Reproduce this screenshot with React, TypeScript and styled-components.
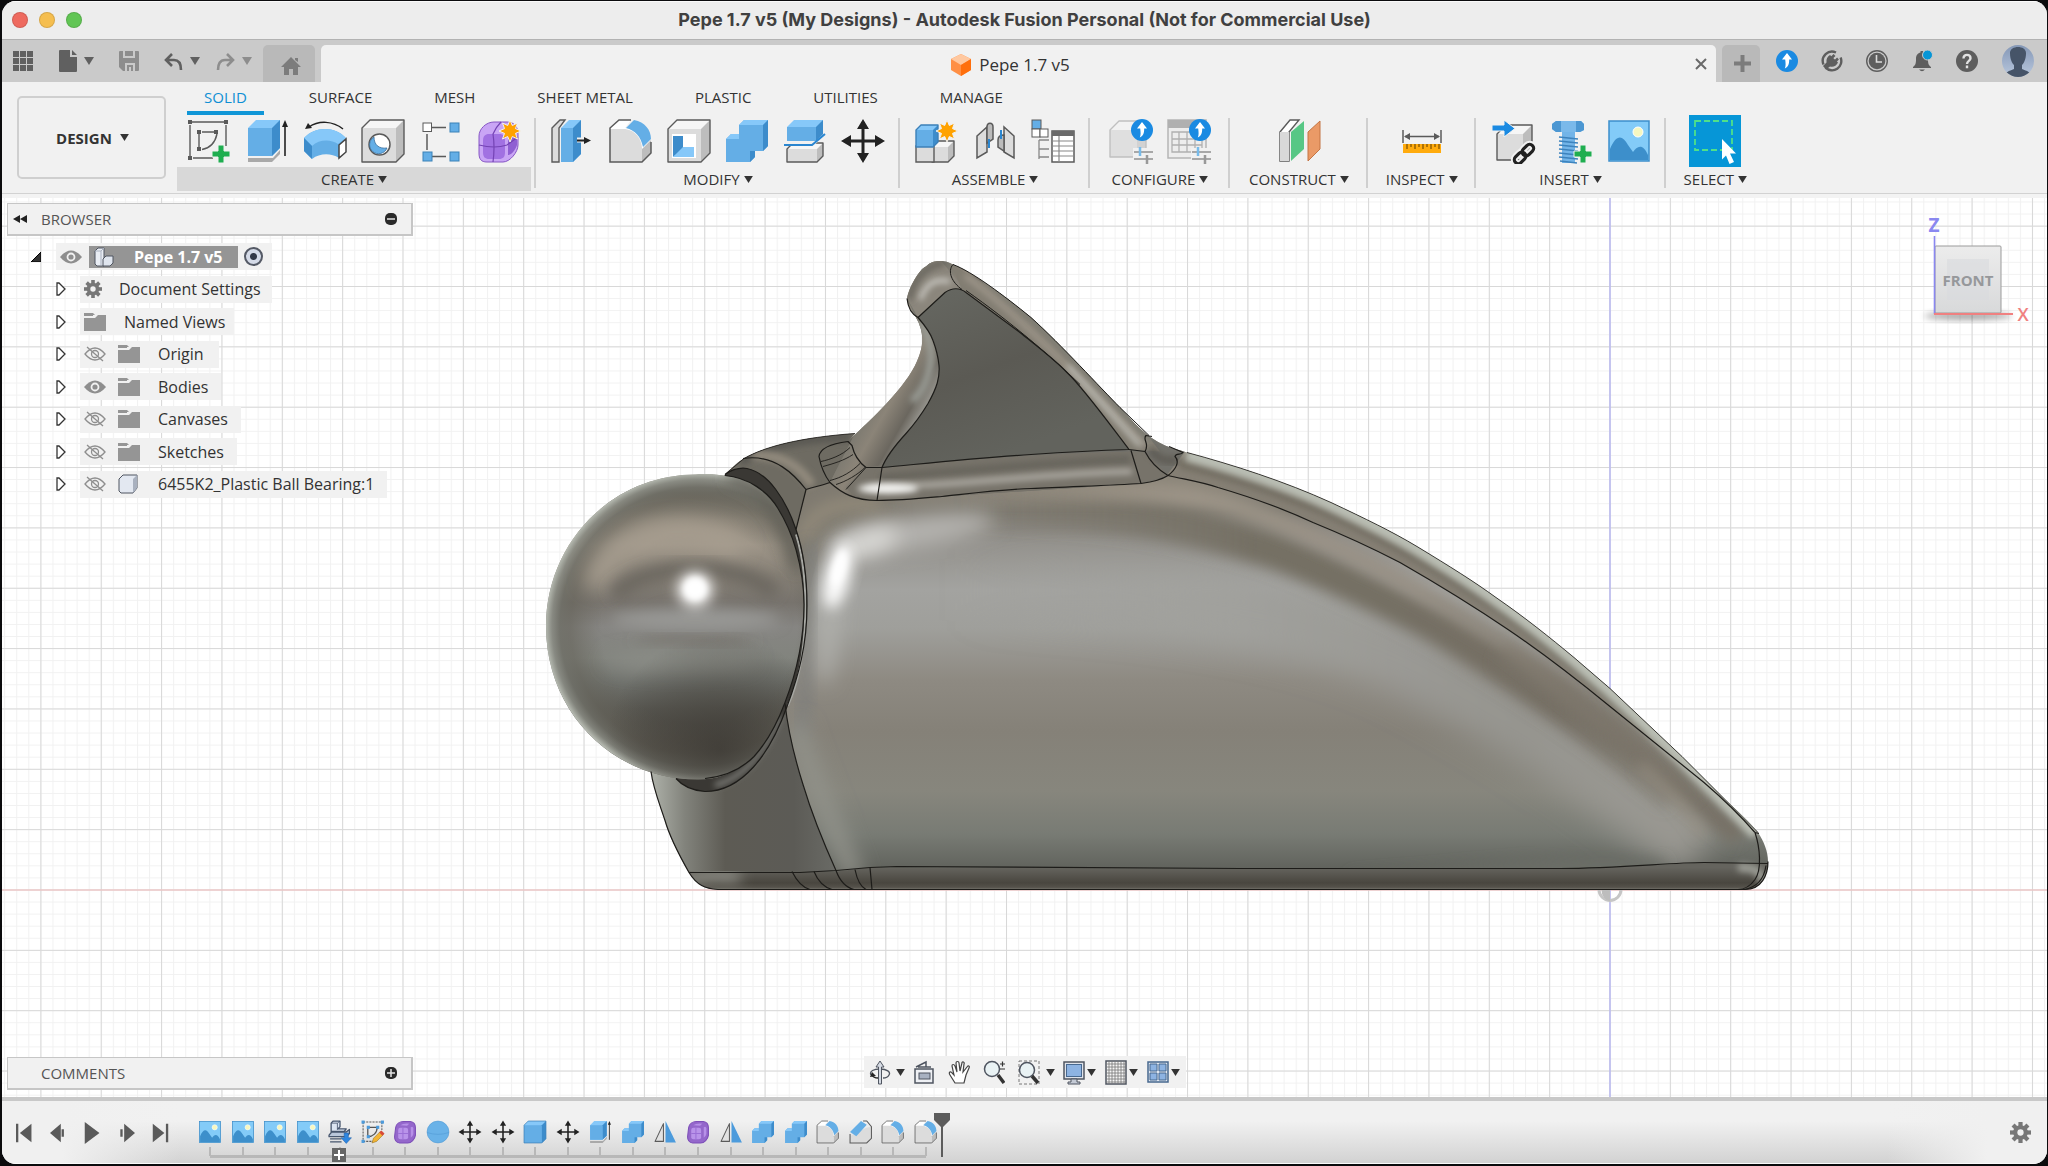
import React from "react";
import styled, { createGlobalStyle, css } from "styled-components";

const Global = createGlobalStyle`
  *, *::before, *::after { box-sizing: border-box; }
  html, body, #root { height: 100%; }
  body { margin: 0; background: #0b0b0d; overflow: hidden; font-family: "Open Sans", "Noto Sans", sans-serif; color: #333; }
  button { font: inherit; color: inherit; background: none; border: 0; margin: 0; padding: 0; }
  svg { display: block; flex: none; }
  ul, ol { list-style: none; margin: 0; padding: 0; }
`;

/* ---------- window frame ---------- */

const AppWindow = styled.div`
  height: 100vh;
  padding: 1px 1px 2px 2px;
  display: flex;
`;

const Frame = styled.div`
  flex: 1;
  min-width: 0;
  display: flex;
  flex-direction: column;
  border-radius: 14px;
  overflow: hidden;
  background: #f1f1f1;
`;

const TitleBar = styled.header`
  display: grid;
  grid-template-columns: 1fr auto 1fr;
  align-items: center;
  height: 39px;
  flex: none;
  padding: 0 10px 1px;
  background: #ededed;
  border-top: 1px solid #fafafa;
  border-bottom: 1px solid #b2b2b2;
`;

const Lights = styled.div`
  display: flex;
  gap: 11px;
`;

const Light = styled.button<{ $c: string }>`
  width: 16px;
  height: 16px;
  border-radius: 50%;
  background: ${(p) => p.$c};
  border: 1px solid rgba(0, 0, 0, 0.12);
`;

const WindowTitle = styled.h1`
  margin: 0;
  font: 700 18px/22px Inter, "Open Sans", sans-serif;
  color: #404040;
  white-space: nowrap;
`;

/* ---------- document tab bar ---------- */

const TabBar = styled.div`
  display: flex;
  align-items: flex-end;
  height: 42px;
  flex: none;
  background: #cacaca;
`;

const QuickTools = styled.div`
  display: flex;
  align-items: center;
  align-self: stretch;
  width: 261px;
  padding-left: 11px;
  color: #606060;
`;

const QuickButton = styled.button<{ $gap?: number; $dim?: boolean }>`
  display: flex;
  align-items: center;
  gap: 7px;
  margin-right: ${(p) => p.$gap ?? 0}px;
  color: ${(p) => (p.$dim ? "#8d8d8d" : "#606060")};
`;

const SideTab = styled.button`
  display: flex;
  align-items: center;
  justify-content: center;
  width: 52px;
  height: 37px;
  padding: 4px 0 0 4px;
  border-radius: 5px 5px 0 0;
  background: #b9b9b9;
  color: #7c7c7c;
`;

const NewTab = styled(SideTab)`
  width: 38px;
  padding: 0 0 0 2px;
  margin-left: 6px;
`;

const ActiveTab = styled.div`
  flex: 1;
  display: flex;
  align-items: center;
  justify-content: center;
  height: 37px;
  margin-left: 6px;
  padding-left: 14px;
  border-radius: 5px 5px 0 0;
  background: #f1f1f1;
`;

const TabName = styled.div`
  flex: 1;
  display: flex;
  align-items: center;
  justify-content: center;
  gap: 8px;
  padding-top: 3px;
  font-size: 17px;
  line-height: 24px;
`;

const CloseTab = styled.button`
  width: 30px;
  display: flex;
  justify-content: center;
  color: #6a6a6a;
`;

const AccountTools = styled.div`
  display: flex;
  align-items: center;
  align-self: stretch;
  padding: 0 13px 0 4px;
`;

const AccountButton = styled.button`
  width: 45px;
  display: flex;
  justify-content: center;
  color: #5e5e5e;
`;

const Avatar = styled.button`
  margin-left: 13px;
`;

/* ---------- ribbon ---------- */

const Ribbon = styled.div`
  display: flex;
  flex: none;
  height: 116px;
  padding-left: 15px;
  background: #f1f1f1;
  border-bottom: 4px solid #f3f3f3;
  box-shadow: inset 0 -1px 0 #d2d2d2;
`;

const WorkspaceButton = styled.button`
  display: flex;
  align-items: center;
  justify-content: center;
  gap: 8px;
  width: 149px;
  height: 83px;
  margin: 14px 6px 0 0;
  padding-left: 2px;
  border: 2px solid #cfcfcf;
  border-radius: 5px;
  font-size: 15px;
  font-weight: 700;
`;

const RibbonMain = styled.div`
  flex: 1;
  min-width: 0;
`;

const RibbonTabs = styled.div`
  display: flex;
  gap: 28px;
  height: 33px;
  padding-left: 15px;
`;

const RibbonTab = styled.button<{ $active?: boolean }>`
  height: 33px;
  padding: 0 17px;
  font-size: 15px;
  line-height: 20px;
  white-space: nowrap;
  color: ${(p) => (p.$active ? "#0e8fd4" : "#333")};
  border-bottom: 4px solid ${(p) => (p.$active ? "#1096d7" : "transparent")};
`;

const Groups = styled.div`
  display: flex;
  height: 76px;
`;

const Group = styled.section<{ $pad: number; $line?: boolean }>`
  display: flex;
  flex-direction: column;
  justify-content: space-between;
  padding: 0 ${(p) => p.$pad}px;
  ${(p) =>
    p.$line &&
    css`
      background: linear-gradient(#cfcfcf, #cfcfcf) right 3px / 2px 70px no-repeat;
    `}
`;

const IconRow = styled.div`
  display: flex;
  justify-content: center;
`;

const ToolButton = styled.button<{ $active?: boolean }>`
  display: flex;
  align-items: center;
  justify-content: center;
  width: ${(p) => (p.$active ? 52 : 58)}px;
  height: 52px;
  background: ${(p) => (p.$active ? "#0696d7" : "none")};
`;

const GroupLabel = styled.button<{ $on?: boolean }>`
  display: flex;
  align-items: center;
  justify-content: center;
  gap: 4px;
  height: 24px;
  margin: 0 -3px;
  font-size: 15px;
  white-space: nowrap;
  background: ${(p) => (p.$on ? "#d8d8d8" : "none")};
`;

/* ---------- viewport ---------- */

const Viewport = styled.main`
  flex: 1;
  min-height: 0;
  position: relative;
  background: #fff;
  display: flex;
  flex-direction: column;
  justify-content: space-between;
  padding: 5px 5px 7px;
`;

const Scene = styled.svg`
  position: absolute;
  inset: 0;
  width: 100%;
  height: 100%;
`;

const Overlay = styled.div`
  position: relative;
  display: flex;
  justify-content: space-between;
  align-items: flex-start;
`;

const OverlayBottom = styled.div`
  position: relative;
  display: grid;
  grid-template-columns: 1fr auto 1fr;
  align-items: end;
  padding-left: 2px;
  margin-left: -2px;
`;

const PanelBar = styled.div`
  display: flex;
  align-items: center;
  width: 406px;
  height: 33px;
  padding: 0 14px 0 5px;
  background: #f1f1f1;
  border: solid #c6c6c6;
  border-width: 1px 2px 2px 1px;
  color: #555;
`;

const PanelName = styled.h2<{ $left: number }>`
  flex: 1;
  margin: 0 0 0 ${(p) => p.$left}px;
  font-size: 15px;
  font-weight: 400;
`;

const Tree = styled.ul`
  display: grid;
  align-content: space-between;
  height: 255px;
  margin-top: 7px;
  padding-left: 24px;
`;

const TreeRow = styled.li<{ $root?: boolean }>`
  display: flex;
  align-items: center;
  padding-left: ${(p) => (p.$root ? 0 : 25)}px;
`;

const Twisty = styled.button<{ $root?: boolean }>`
  width: ${(p) => (p.$root ? 25 : 24)}px;
  height: 27px;
  display: flex;
  align-items: center;
`;

const NodeBox = styled.div<{ $end: number }>`
  display: flex;
  align-items: center;
  height: 27px;
  padding: 0 ${(p) => p.$end}px 0 4px;
  background: #f1f1f1;
`;

const NodeIcon = styled.span<{ $w: number }>`
  width: ${(p) => p.$w}px;
  display: flex;
`;

const NodeText = styled.span`
  font-size: 16px;
  line-height: 24px;
  white-space: nowrap;
`;

const RootName = styled.span`
  display: flex;
  align-items: center;
  gap: 20px;
  height: 22px;
  padding: 0 15px 0 5px;
  margin: 0 6px 0 7px;
  background: #959595;
  color: #fff;
  font-size: 16px;
  font-weight: 700;
  white-space: nowrap;
`;

const RootRadio = styled.input`
  appearance: none;
  margin: 0;
  width: 19px;
  height: 19px;
  border-radius: 50%;
  border: 2px solid #555a66;
  background: radial-gradient(circle, #333a48 0 3px, #d5dbe8 4px 100%);
`;

const NavBar = styled.div`
  display: flex;
  align-items: center;
  height: 32px;
  margin-bottom: 2px;
  padding: 0 3px 0 5px;
  background: #f1f1f1;
`;

const NavButton = styled.button<{ $w: number; $gap?: number }>`
  display: flex;
  align-items: center;
  gap: ${(p) => p.$gap ?? 0}px;
  width: ${(p) => p.$w}px;
`;

const ViewCube = styled.svg`
  margin: 5px 9px 0 0;
`;

/* ---------- timeline ---------- */

const Timeline = styled.footer`
  display: flex;
  align-items: flex-start;
  flex: none;
  height: 67px;
  padding: 15px 16px 0 5px;
  border-top: 4px solid #c8c8c8;
  border-bottom: 1px solid #fafafa;
  background:
    linear-gradient(90deg, #f0f0f0 60px, rgba(240, 240, 240, 0) 180px, rgba(240, 240, 240, 0) calc(100% - 160px), #f0f0f0 calc(100% - 60px)),
    linear-gradient(#f1f1f1 20px, #d2d2d2);
`;

const Playback = styled.div`
  display: flex;
  width: 187px;
  padding-top: 4px;
`;

const PlayButton = styled.button`
  width: 34px;
  height: 26px;
  display: flex;
  align-items: center;
  justify-content: center;
`;

const Features = styled.ol`
  display: flex;
  width: 748px;
`;

const Feature = styled.li<{ $edge?: "first" | "last" }>`
  flex: 1;
  position: relative;
  display: flex;
  flex-direction: column;
  align-items: center;
  height: 42px;
  padding-top: 3px;
  background:
    linear-gradient(#b8b8b8, #b8b8b8) center 31px / 2px 9px no-repeat,
    linear-gradient(#b8b8b8, #b8b8b8)
      ${(p) => (p.$edge === "first" ? "right" : "left")} 39px /
      ${(p) => (p.$edge ? "17px" : "100%")} 3px no-repeat;
`;

const FeatureButton = styled.button`
  width: 26px;
  height: 26px;
  display: flex;
  align-items: center;
  justify-content: center;
`;

const ExpandBadge = styled.button`
  position: absolute;
  left: 8px;
  top: 32px;
  width: 14px;
  height: 14px;
  background: #666;
  display: flex;
  align-items: center;
  justify-content: center;
`;

const Marker = styled.svg`
  margin: -3px 0 0 -9px;
`;

const SettingsButton = styled.button`
  margin: 6px 0 0 auto;
`;

/* ---------- small drawings ---------- */

const Caret = ({ w = 9, c = "#333" }: { w?: number; c?: string }) => (
  <svg width={w} height={w - 2} viewBox="0 0 10 8">
    <path d="M0 0H10L5 8Z" fill={c} />
  </svg>
);

const D = "#5a5a5a";
const B = "#64aee6";
const BL = "#86c8f9";
const BD = "#3d8ccb";

const Plus = ({ x, y }: { x: number; y: number }) => (
  <path
    transform={`translate(${x} ${y})`}
    d="M-3-9H3V-3H9V3H3V9H-3V3H-9V-3H-3Z"
    fill="#1fae50"
    stroke="#f1f1f1"
    strokeWidth="1"
  />
);

const Star = ({ x, y }: { x: number; y: number }) => (
  <path
    transform={`translate(${x} ${y})`}
    d="M0-11L2.3-5.5L7.5-8L5.5-2.4L11 0L5.5 2.4L7.5 8L2.3 5.5L0 11L-2.3 5.5L-7.5 8L-5.5 2.4L-11 0L-5.5-2.4L-7.5-8L-2.3-5.5Z"
    fill="#ffa200"
    stroke="#f1f1f1"
  />
);

const UpBadge = ({ x, y, r = 10 }: { x: number; y: number; r?: number }) => (
  <g transform={`translate(${x} ${y}) scale(${r / 10})`}>
    <circle r="11" fill="#1a8ae2" />
    <path d="M0-8L5-1.500H2.200C2.200 3 1.500 5.500-2.200 7.500C-1 5-1.400 2-1.800-1.500H-5Z" fill="#fff" />
  </g>
);

const Cube = ({ x, y, w, h, d, f = "#dcdcdc", t = "#f6f6f6", s = "#bdbdbd", o = D }: any) => (
  <g transform={`translate(${x} ${y})`}>
    <path d={`M0 ${d}L${d} 0H${w}V${h - d}L${w - d} ${h}H0Z`} fill={t} />
    <path d={`M0 ${d}H${w - d}V${h}H0Z`} fill={f} />
    <path d={`M${w - d} ${d}L${w} 0V${h - d}L${w - d} ${h}Z`} fill={s} />
    <path d={`M0 ${d}L${d} 0H${w}V${h - d}L${w - d} ${h}H0Z`} fill="none" stroke={o} strokeWidth="1.4" strokeLinejoin="round" />
  </g>
);

const blue = { f: B, t: BL, s: BD, o: "none" };

const art: Record<string, React.ReactNode> = {
  sketch: (
    <>
      <path d="M5 3H37M3 6V37M39 6V27M6 39H26M12 15V28M15 13H27" stroke={D} strokeWidth="1.4" />
      <path d="M30 15C28 24 24 29 15 30.500" fill="none" stroke={D} strokeWidth="1.4" />
      {[[1, 1], [37, 1], [1, 37], [10, 11], [27, 11], [10, 28]].map(([x, y]) => (
        <rect key={`${x}-${y}`} x={x} y={y} width="4" height="4" fill={D} />
      ))}
      <Plus x={34} y={35} />
    </>
  ),
  sketchSmall: (
    <>
      <path d="M3 3H39M3 3V40M39 3V18M3 40H22" stroke={D} strokeWidth="2" strokeDasharray="4 2" />
      <path d="M12 13H30C30 24 22 31 12 31Z" fill="none" stroke="#555" strokeWidth="2.500" />
      {[[0, 0], [37, 0], [0, 37], [10, 10], [28, 10], [10, 28]].map(([x, y]) => (
        <rect key={`${x}-${y}`} x={x} y={y} width="6" height="6" fill="#4c9bdc" />
      ))}
      <path d="M20 43L23 34L36 21L42 27L29 40Z" fill="#f3b434" stroke="#8a6a20" strokeWidth="1" />
      <path d="M34 23L38 19L44 25L40 29Z" fill="#d84a3a" />
    </>
  ),
  extrude: (
    <>
      <path d="M3 38H27L35 30V35L27 43H3Z" fill="#a9a9a9" />
      <path d="M3 36H27L35 28V31L28 39H3Z" fill="#f1f1f1" />
      <Cube x={3} y={1} w={32} h={36} d={8} {...blue} />
      <path d="M40 37V6" stroke="#222" strokeWidth="1.600" />
      <path d="M37 8L40 1L43 8Z" fill="#222" />
    </>
  ),
  revolve: (
    <>
      <path d="M1 19C12 7 32 7 43 19L36 26L36 39C28 34 17 34 9 40L1 32Z" fill={B} />
      <path d="M1 19C12 7 32 7 43 19L35 25C28 20 16 20 9 27Z" fill={BL} />
      <path d="M1 19L9 27V40L1 32Z" fill={BD} />
      <path d="M36 26L43 20V33L36 39Z" fill="#fff" stroke="#444" strokeWidth="1.500" />
      <path d="M6 8C16 1 30 2 40 10" fill="none" stroke="#222" strokeWidth="1.500" />
      <path d="M2 10L5 4L9 9Z" fill="#222" />
    </>
  ),
  hole: (
    <>
      <Cube x={1} y={1} w={42} h={42} d={8} />
      <circle cx="18.500" cy="25.500" r="10.500" fill="#fff" stroke={D} strokeWidth="1.500" />
      <path d="M13 18A9 9 0 1 0 26 29C18 30 13 26 13 18Z" fill={B} stroke="#3b6f9c" strokeWidth=".8" />
    </>
  ),
  pattern: (
    <>
      <path d="M13 8.500H27M8 15V31M13 37.500H27" stroke={D} strokeWidth="1.500" />
      <rect x="4" y="4" width="8.500" height="8.500" fill="#fff" stroke={D} />
      {[[31, 4], [4, 33], [31, 33]].map(([x, y]) => (
        <rect key={`${x}${y}`} x={x} y={y} width="9" height="9" fill={B} stroke="#3b82b8" />
      ))}
    </>
  ),
  form: (
    <>
      <path d="M2 17C2 10 9 3 17 3H30C38 3 41 9 41 15V26C41 33 33 43 26 43H10C4 43 2 40 2 34Z" fill="#c9a5f5" stroke="#8656c4" />
      <path d="M6 22C6 17 8 15 12 15H22C27 15 28 17 28 22V33C28 38 26 40 22 40H12C8 40 6 38 6 33Z" fill="#a171e2" />
      <path d="M31 17C34 14 38 14 40 17V26C38 32 34 36 31 36Z" fill="#8f5fd2" />
      <path d="M2 26Q18 30 30 26L41 18M16 43Q18 28 16 15Q19 8 24 3" fill="none" stroke="#7443b4" strokeWidth="1.200" />
    </>
  ),
  formSmall: (
    <>
      <path d="M4 14C5 6 12 2 19 2H32C39 3 42 8 42 14V28C41 36 34 43 27 43H12C5 42 2 38 2 31Z" fill="#9467cb" stroke="#7d4fb8" strokeWidth="2" />
      <path d="M9 18Q9 14 13 14H24Q28 14 28 18V32Q28 36 24 36H13Q9 36 9 32Z" fill="#b993ea" />
      <path d="M18 14V36M9 25H28" stroke="#9b6fd6" strokeWidth="2" />
      <path d="M33 13Q37 10 38 15V26Q37 31 33 33ZM13 9Q18 5 30 6L26 10Z" fill="#b791e8" />
    </>
  ),
  press: (
    <>
      <path d="M1 9L9 1H14L8 9V43H1Z" fill="#dcdcdc" stroke={D} strokeWidth="1.400" />
      <Cube x={10} y={1} w={20} h={42} d={8} {...blue} />
      <path d="M26 21H36" stroke="#f1f1f1" strokeWidth="5" />
      <path d="M26 21.500H35" stroke="#222" strokeWidth="1.800" />
      <path d="M33 18L40 21.500L33 25Z" fill="#222" />
    </>
  ),
  fillet: (
    <>
      <path d="M1 9L10 1H22L16 9C28 10 34 20 34 28L42 21V34L33 43H1Z" fill="#fff" />
      <path d="M1 10H14C26 10 33 20 33 30V43H1Z" fill="#dcdcdc" />
      <path d="M33 30L42 21V34L33 43Z" fill="#bdbdbd" />
      <path d="M17 9L25 1C36 3 42 11 42 20L34 28C32 18 26 11 17 9Z" fill={B} />
      <path d="M22 1H10L1 9V43H33L42 34V23" fill="none" stroke={D} strokeWidth="1.500" />
    </>
  ),
  chamfer: (
    <>
      <path d="M1 30L32 14L42 12V34L33 43H1Z" fill="#dcdcdc" />
      <path d="M1 22L22 1L33 8L13 30Z" fill={B} />
      <path d="M1 26V43H33L42 34V12L33 1H26" fill="none" stroke={D} strokeWidth="2" />
    </>
  ),
  shell: (
    <>
      <Cube x={1} y={1} w={42} h={42} d={9} />
      <rect x="5" y="15" width="24" height="24" fill="#fff" />
      <path d="M6 17H16V30L6 38Z" fill={BD} />
      <path d="M6 38L16 28H27V38Z" fill={BL} />
    </>
  ),
  combine: (
    <>
      <path d="M1 20L6 15H14V6L19 1H43V27L38 32H30V38L25 43H1Z" fill={B} />
      <path d="M1 20L6 15H14V20ZM14 6L19 1H43L38 6Z" fill={BL} />
      <path d="M38 6L43 1V27L38 32ZM25 32H30V38L25 43Z" fill={BD} />
    </>
  ),
  split: (
    <>
      <Cube x={4} y={24} w={36} h={19} d={6} />
      <path d="M0 27H30L44 15V9L30 21H0Z" fill="#f1f1f1" />
      <Cube x={4} y={1} w={36} h={21} d={7} {...blue} />
      <path d="M1 26H29L42 15" fill="none" stroke="#2a86d0" strokeWidth="2" />
    </>
  ),
  move: (
    <>
      <path d="M22 8V36M8 22H36" stroke="#222" strokeWidth="3" />
      <path d="M22 0L28 10H16ZM22 44L28 34H16ZM0 22L10 16V28ZM44 22L34 16V28Z" fill="#222" />
    </>
  ),
  newComponent: (
    <>
      <Cube x={17} y={22} w={22} h={21} d={6} />
      <path d="M1 27H19V43H1Z" fill="#dcdcdc" stroke={D} strokeWidth="1.400" />
      <Cube x={1} y={6} w={22} h={22} d={5} {...blue} o="#3c80b8" />
      <Star x={32} y={12} />
    </>
  ),
  joint: (
    <>
      <path d="M4 17L14 8V33L4 39Z" fill="#dcdcdc" stroke={D} strokeWidth="1.500" />
      <path d="M14 8C14 3 20 3 20 8V20L14 24Z" fill="#bbb" stroke={D} strokeWidth="1.500" />
      <path d="M41 17L31 8V33L41 39Z" fill="#dcdcdc" stroke={D} strokeWidth="1.500" />
      <path d="M31 16C27 16 25 18 25 21V28L31 32Z" fill="#bbb" stroke={D} strokeWidth="1.500" />
      <path d="M16 20V29M28 11V20" stroke="#2a86d0" strokeWidth="2" />
    </>
  ),
  bom: (
    <>
      <rect x="1" y="1" width="9" height="9" fill={B} stroke={D} />
      <rect x="1" y="10" width="8" height="8" fill="#fff" stroke={D} />
      <rect x="9" y="10" width="8" height="8" fill="#fff" stroke={D} />
      <path d="M8 21V40M8 21H18M8 30H18M8 38H18" stroke="#888" fill="none" strokeWidth="1.300" />
      <rect x="21" y="12" width="22" height="31" fill="#fff" stroke={D} strokeWidth="1.500" />
      <rect x="21" y="12" width="22" height="5" fill="#6a6a6a" />
      <path d="M28 17V43M21 22H43M21 27H43M21 32H43M21 37H43" stroke="#888" strokeWidth="1.200" />
    </>
  ),
  configBody: (
    <>
      <Cube x={1} y={2} w={36} h={36} d={9} f="#dfdfdf" t="#f2f2f2" s="#d2d2d2" o="#c0c0c0" />
      <path d="M24 29H46V46H24Z" fill="#f1f1f1" />
      <path d="M25 33H44M25 40H44" stroke="#a8a8a8" strokeWidth="2" />
      <path d="M31 28V37" stroke="#77bbea" strokeWidth="2.500" />
      <path d="M38 36V45" stroke="#999" strokeWidth="2.500" />
      <UpBadge x={33} y={11} />
    </>
  ),
  configTable: (
    <>
      <rect x="1" y="1" width="38" height="38" fill="#ededed" stroke="#b5b5b5" strokeWidth="1.500" />
      <rect x="1" y="1" width="38" height="8" fill="#b0b0b0" />
      <path d="M5 13H35V33H5ZM5 20H35M5 26H35M12 13V33M20 13V33M28 13V33" fill="none" stroke="#b0b0b0" strokeWidth="1.300" />
      <path d="M24 29H46V46H24Z" fill="#f1f1f1" />
      <path d="M25 33H44M25 40H44" stroke="#a8a8a8" strokeWidth="2" />
      <path d="M31 28V37" stroke="#77bbea" strokeWidth="2.500" />
      <path d="M38 36V45" stroke="#999" strokeWidth="2.500" />
      <UpBadge x={33} y={11} />
    </>
  ),
  construct: (
    <>
      <path d="M3 13L13 1H22L12 13V42H3Z" fill="#fff" stroke={D} strokeWidth="1.400" />
      <path d="M3 13H12V42H3Z" fill="#d9d9d9" />
      <path d="M14 13L27 2V30L14 42Z" fill="#57c785" />
      <path d="M31 13L43 2V30L31 42Z" fill="#ea9a67" stroke="#c47544" />
    </>
  ),
  inspect: (
    <>
      <path d="M3 11V24M41 11V24M5 17.500H39" stroke={D} strokeWidth="1.500" />
      <path d="M4 17.500L10 14V21ZM40 17.500L34 14V21Z" fill={D} />
      <rect x="3" y="25" width="38" height="9" fill="#ffab0d" />
      <path d="M7 25V30M11 25V28M15 25V30M19 25V28M23 25V30M27 25V28M31 25V30M35 25V28M39 25V30" stroke="#7a4d00" strokeWidth="1.200" />
    </>
  ),
  derive: (
    <>
      <Cube x={6} y={6} w={35} h={35} d={9} />
      <path d="M1 6H13V1L24 9.500L13 18V12H1Z" fill="#1a8ae2" stroke="#f1f1f1" />
      <g transform="translate(33 35) rotate(-45)" fill="none" stroke="#f1f1f1" strokeWidth="7">
        <rect x="-12" y="-4" width="13" height="8" rx="4" />
        <rect x="-1" y="-4" width="13" height="8" rx="4" />
      </g>
      <g transform="translate(33 35) rotate(-45)" fill="none" stroke="#222" strokeWidth="3.200">
        <rect x="-12" y="-4" width="13" height="8" rx="4" />
        <rect x="-1" y="-4" width="13" height="8" rx="4" />
      </g>
    </>
  ),
  bolt: (
    <>
      <path d="M3 5L7 2H32L35 5V11L31 13H7L3 10Z" fill="#7ab9ea" />
      <path d="M27 2H32L35 5V11L31 13H27ZM3 5L7 2H12V13H7L3 10Z" fill="#4c97d2" />
      <rect x="13" y="13" width="13" height="31" fill="#72b4e8" />
      <path d="M10 18L29 20M10 22L29 24M10 26L29 28M10 30L29 32M10 34L29 36M10 38L29 40M11 42L28 44" stroke="#3d83bd" strokeWidth="1.600" />
      <Plus x={34} y={35} />
    </>
  ),
  image: (
    <>
      <rect x="2" y="2" width="40" height="40" fill="#83cbf8" stroke="#3d8fcb" strokeWidth="1.500" />
      <circle cx="31" cy="13" r="5" fill="#f6f7c0" stroke="#fff" />
      <path d="M3 30C9 16 15 15 21 26L26 33C30 27 36 24 41 36V41H3Z" fill="#3d8fcb" />
    </>
  ),
  select: (
    <>
      <rect x="2" y="2" width="37" height="29" fill="none" stroke="#4fe08a" strokeWidth="1.800" strokeDasharray="6 3" />
      <path d="M29 20L43 34.500H37L41 43L36.500 45L33 36.500L29 40.500Z" fill="#fff" />
    </>
  ),
  sphere: (
    <>
      <circle cx="22" cy="22" r="21" fill="#69b2e8" stroke="#4b95d0" />
      <path d="M1 23Q22 30 43 23" fill="none" stroke="#4b95d0" />
    </>
  ),
  box: <Cube x={1} y={1} w={42} h={42} d={8} {...blue} o="#3c80b8" />,
  mirror: (
    <>
      <path d="M19 6V40H3Z" fill="#e2e2e2" stroke={D} strokeWidth="2" strokeLinejoin="round" />
      <path d="M23 1V42H43Z" fill="#4c9bdc" />
    </>
  ),
  component: (
    <>
      <path d="M5 5L9 1H22V12L18 16H34L30 21H5Z" fill="#dce5f2" stroke="#47566e" strokeWidth="2.500" strokeLinejoin="round" />
      <path d="M5 5H17V18M17 5L22 1" fill="none" stroke="#47566e" strokeWidth="1.600" />
      <path d="M1 28L6 22H34L40 17V25L34 31H1Z" fill="#b9c6da" stroke="#47566e" strokeWidth="2.500" strokeLinejoin="round" />
      <path d="M3 35H25M3 41H25" stroke="#47566e" strokeWidth="2.500" />
      <path d="M30 24H38V33H44L34 44L24 33H30Z" fill="#2f86e0" stroke="#1d5da6" />
    </>
  ),
};
art.formStar = (
  <>
    {art.form}
    <Star x={33} y={12} />
  </>
);

const Art = ({ n, s = 46 }: { n: string; s?: number }) => (
  <svg width={s} height={s} viewBox="-1 -1 46 46">
    {art[n]}
  </svg>
);

const Eye = () => (
  <svg width="22" height="14" viewBox="0 0 22 14">
    <path d="M0 7Q11-6 22 7Q11 20 0 7Z" fill="#8e8e8e" />
    <circle cx="11" cy="7" r="3.500" fill="none" stroke="#f1f1f1" strokeWidth="1.800" />
  </svg>
);

const EyeOff = () => (
  <svg width="22" height="16" viewBox="0 0 22 16" fill="none" stroke="#8e8e8e" strokeWidth="1.300">
    <path d="M1 8Q11-4 21 8Q11 20 1 8ZM3 1L19 15" />
    <circle cx="11" cy="8" r="3.500" />
  </svg>
);

const Folder = () => (
  <svg width="22" height="18" viewBox="0 0 22 18">
    <path d="M0 0H9L11 2H9V3H0Z" fill="#959595" />
    <path d="M0 5H11L14 2H22V18H0Z" fill="#959595" />
  </svg>
);

const Gear = ({ s = 18 }: { s?: number }) => (
  <svg width={s} height={s} viewBox="-10 -10 20 20" fill="#777">
    {[0, 45, 90, 135].map((a) => (
      <rect key={a} x="-2" y="-10" width="4" height="20" transform={`rotate(${a})`} />
    ))}
    <circle r="7" />
    <circle r="3" fill="#f1f1f1" />
  </svg>
);

const BodyCube = ({ pair }: { pair?: boolean }) => (
  <svg width="20" height="20" viewBox="0 0 20 20" stroke="#4f5560" strokeLinejoin="round">
    {pair ? (
      <>
        <path d="M1 4L4 1H10V19H3L1 17Z" fill="#e9edf4" />
        <path d="M9 12L12 9H19V16L16 19H9Z" fill="#dfe5ee" />
        <path d="M7 4V18M1 4H7L10 1" fill="none" stroke="#a9b1bf" />
      </>
    ) : (
      <>
        <path d="M1 5L5 1H19V14L15 19H3L1 17Z" fill="#e3e8f1" />
        <path d="M15 5L19 1V14L15 19Z" fill="#a9b1bf" stroke="none" />
      </>
    )}
  </svg>
);

const RoundToggle = ({ plus }: { plus?: boolean }) => (
  <svg width="12" height="12" viewBox="0 0 12 12">
    <rect width="12" height="12" rx="5" fill="#2a2a2a" />
    <path d={plus ? "M2 6H10M6 2V10" : "M2 6H10"} stroke="#e6e6e6" strokeWidth="1.500" />
  </svg>
);

/* ---------- the modelled part ---------- */

const BODY =
  "M725 475C733 467 740 461 744 459C765 447 800 438 855 434L848 442C865 425 900 395 915 366C924 348 925 334 916 318C909 309 907 303 907 299C909 288 919 270 926 267C931 261 943 259 953 265C972 272 1004 296 1031 318C1062 346 1100 388 1120 408C1132 421 1146 438 1165 446C1172 449 1178 450 1187 453C1232 465 1285 482 1331 503C1365 519 1392 532 1417 547C1450 567 1474 582 1496 598C1525 618 1550 638 1574 658L1610 689L1682 757L1725 800C1738 812 1750 823 1758 833C1764 842 1768 852 1768 862C1768 875 1762 890 1745 890H718C705 889 697 886 689 873C676 850 669 835 665 821C658 800 653 788 651 768L640 600Z";
const TAIL_IN =
  "M1168 476C1185 480 1200 482 1218 488C1252 498 1283 509 1313 523C1345 536 1373 549 1400 563C1440 586 1477 609 1508 630C1545 655 1577 680 1610 707L1704 783C1725 801 1742 818 1755 833";
const TAIL_OUT =
  "M1187 453C1232 465 1285 482 1331 503C1365 519 1392 532 1417 547C1450 567 1474 582 1496 598C1525 618 1550 638 1574 658L1610 689L1682 757L1725 800L1758 833";
const SPHERE =
  "M696 475C706 474 716 475 723 476C748 478 768 492 778 509C786 522 792 536 796 550C801 568 804 585 804 605C804 640 797 672 785 703C776 727 765 745 754 757C738 773 718 780 698 780C612 780 546 712 546 627C546 543 612 475 696 475Z";
const FACE =
  "M918 318L945 293C952 288 960 288 966 293L1020 333C1040 349 1056 361 1067 373C1083 388 1110 425 1129 450C1095 451 1060 453 1031 455C970 459 925 464 882 468C886 458 895 446 906 434C915 424 922 414 928 404C937 388 940 378 939 366C938 355 936 349 933 341C930 332 924 325 918 318Z";

const Model = () => (
  <Scene viewBox="2 198 2045 900" preserveAspectRatio="xMidYMid slice" role="img" aria-label="Front view of the model">
    <defs>
      <pattern id="minor" x="1609.5" y="890" width="12.070" height="12.070" patternUnits="userSpaceOnUse">
        <path d="M0 .5H13M.5 0V13" stroke="#f1f1f1" />
      </pattern>
      <pattern id="major" x="1609.5" y="890" width="60.350" height="60.350" patternUnits="userSpaceOnUse">
        <path d="M0 .5H61M.5 0V61" stroke="#d8d8d8" />
      </pattern>
      <linearGradient id="body" x1="0" y1="440" x2="0" y2="869" gradientUnits="userSpaceOnUse">
        <stop offset="0" stopColor="#8b8579" />
        <stop offset=".11" stopColor="#8b8579" />
        <stop offset=".17" stopColor="#7f7b72" />
        <stop offset=".24" stopColor="#93918c" />
        <stop offset=".35" stopColor="#a3a3a0" />
        <stop offset=".44" stopColor="#9f9f9b" />
        <stop offset=".56" stopColor="#8e8a82" />
        <stop offset=".68" stopColor="#858178" />
        <stop offset=".82" stopColor="#87867d" />
        <stop offset=".92" stopColor="#787b74" />
        <stop offset="1" stopColor="#61635d" />
      </linearGradient>
      <linearGradient id="rim" x1="0" y1="868" x2="0" y2="890" gradientUnits="userSpaceOnUse">
        <stop offset="0" stopColor="#65645e" />
        <stop offset=".7" stopColor="#49463f" />
        <stop offset=".9" stopColor="#55524b" />
        <stop offset="1" stopColor="#77766f" />
      </linearGradient>
      <linearGradient id="neck" x1="655" y1="0" x2="840" y2="0" gradientUnits="userSpaceOnUse">
        <stop offset="0" stopColor="#a9aca4" />
        <stop offset=".16" stopColor="#82837c" />
        <stop offset=".38" stopColor="#5d5b54" />
        <stop offset=".75" stopColor="#5c5b56" />
        <stop offset="1" stopColor="#6b6c67" />
      </linearGradient>
      <linearGradient id="warm" x1="960" y1="0" x2="1720" y2="0" gradientUnits="userSpaceOnUse">
        <stop offset="0" stopColor="#a0978a" stopOpacity="0" />
        <stop offset=".3" stopColor="#a0978a" />
        <stop offset=".6" stopColor="#978f83" />
        <stop offset=".8" stopColor="#827b70" stopOpacity=".6" />
        <stop offset="1" stopColor="#827b70" stopOpacity="0" />
      </linearGradient>
      <linearGradient id="shade" x1="960" y1="0" x2="1700" y2="0" gradientUnits="userSpaceOnUse">
        <stop offset="0" stopColor="#746f63" stopOpacity="0" />
        <stop offset=".4" stopColor="#746f63" />
        <stop offset=".8" stopColor="#746e63" />
        <stop offset="1" stopColor="#7c766b" stopOpacity=".3" />
      </linearGradient>
      <linearGradient id="sheen" x1="960" y1="0" x2="1700" y2="0" gradientUnits="userSpaceOnUse">
        <stop offset="0" stopColor="#a2a29e" stopOpacity="0" />
        <stop offset=".35" stopColor="#a1a19d" />
        <stop offset=".75" stopColor="#969590" />
        <stop offset="1" stopColor="#9b9993" />
      </linearGradient>
      <linearGradient id="ball" x1="0" y1="475" x2="0" y2="780" gradientUnits="userSpaceOnUse">
        <stop offset="0" stopColor="#97968d" />
        <stop offset=".06" stopColor="#706c62" />
        <stop offset=".15" stopColor="#938b7e" />
        <stop offset=".23" stopColor="#9f9689" />
        <stop offset=".33" stopColor="#857f75" />
        <stop offset=".42" stopColor="#77736d" />
        <stop offset=".5" stopColor="#868582" />
        <stop offset=".6" stopColor="#82847e" />
        <stop offset=".68" stopColor="#6f716c" />
        <stop offset=".77" stopColor="#5b5a54" />
        <stop offset=".9" stopColor="#48443e" />
        <stop offset="1" stopColor="#57544d" />
      </linearGradient>
      <radialGradient id="ballRim" cx="699" cy="627" r="153" gradientUnits="userSpaceOnUse">
        <stop offset=".64" stopColor="#68665d" stopOpacity="0" />
        <stop offset=".84" stopColor="#66645b" stopOpacity=".6" />
        <stop offset=".91" stopColor="#6e6e66" stopOpacity=".8" />
        <stop offset=".96" stopColor="#898b83" stopOpacity=".85" />
        <stop offset="1" stopColor="#b3b7ae" />
      </radialGradient>
      <radialGradient id="ballShade" cx="720" cy="750" r="115" gradientUnits="userSpaceOnUse">
        <stop offset="0" stopColor="#3a3732" stopOpacity=".7" />
        <stop offset=".5" stopColor="#3f3c36" stopOpacity=".4" />
        <stop offset="1" stopColor="#3a3732" stopOpacity="0" />
      </radialGradient>
      <linearGradient id="face" x1="930" y1="300" x2="990" y2="460" gradientUnits="userSpaceOnUse">
        <stop offset="0" stopColor="#656660" />
        <stop offset=".5" stopColor="#5b5a54" />
        <stop offset="1" stopColor="#62635d" />
      </linearGradient>
      <linearGradient id="fin" x1="860" y1="400" x2="930" y2="440" gradientUnits="userSpaceOnUse">
        <stop offset="0" stopColor="#72726b" />
        <stop offset=".35" stopColor="#8b8478" />
        <stop offset=".6" stopColor="#6b675f" />
        <stop offset=".8" stopColor="#a3a29c" />
        <stop offset="1" stopColor="#72716b" />
      </linearGradient>
      <clipPath id="inBody"><path d={BODY} /></clipPath>
      <clipPath id="inBall"><path d={SPHERE} /></clipPath>
      <filter id="b3" x="-50%" y="-50%" width="200%" height="200%"><feGaussianBlur stdDeviation="3" /></filter>
      <filter id="b7" x="-50%" y="-50%" width="200%" height="200%"><feGaussianBlur stdDeviation="7" /></filter>
      <filter id="b16" x="-50%" y="-50%" width="200%" height="200%"><feGaussianBlur stdDeviation="16" /></filter>
      <filter id="glow" x="-100%" y="-200%" width="300%" height="500%"><feGaussianBlur stdDeviation="10" /></filter>
    </defs>

    <rect x="-2000" y="-1000" width="6000" height="3000" fill="url(#minor)" />
    <rect x="-2000" y="-1000" width="6000" height="3000" fill="url(#major)" />
    <path d="M-2000 890.500H4000" stroke="#f3bcbc" />
    <path d="M1610 -1000V2000" stroke="#b9b8f0" strokeWidth="1.500" />
    <circle cx="1610" cy="890" r="11" fill="none" stroke="#c6c6c6" strokeWidth="3" />
    <path d="M1610 879A12 12 0 0 0 1610 902Z" fill="#bdbdbd" />

    <path d={BODY} fill="url(#body)" />
    <g clipPath="url(#inBody)">
      {/* upper flank: sheen, shade and warm bands that follow the back */}
      <path d="M960 590C1150 590 1300 615 1400 660C1470 695 1560 750 1620 795L1700 850" fill="none" stroke="url(#sheen)" strokeWidth="62" filter="url(#b16)" />
      <path d="M940 512C1080 505 1180 522 1270 550C1310 564 1400 606 1443 630C1480 652 1530 684 1570 712C1600 734 1640 764 1676 796" fill="none" stroke="url(#shade)" strokeWidth="36" filter="url(#b7)" />
      <path d="M1500 655C1570 700 1650 760 1740 838" fill="none" stroke="#777166" strokeWidth="22" filter="url(#b7)" />
      <path d="M960 497C1120 488 1190 492 1235 507C1330 537 1420 590 1500 640L1700 800" fill="none" stroke="url(#warm)" strokeWidth="16" filter="url(#b7)" />
      <path d="M1640 766C1668 790 1690 812 1704 836" fill="none" stroke="#989184" strokeWidth="7" filter="url(#b7)" />
      <path d="M1700 812V860" stroke="#a5a39d" strokeWidth="16" filter="url(#b7)" />
      <path d="M1738 822V866" stroke="#7f827a" strokeWidth="16" filter="url(#b7)" />
      <path d="M1350 876C1500 866 1590 850 1668 862L1650 880H1350Z" fill="#6c6e67" filter="url(#b7)" />
      {/* face of the head */}
      <path d="M780 440L870 434L900 515C850 518 820 535 812 580L800 660L780 600Z" fill="#7f7a70" filter="url(#b7)" />
      <path d="M802 540C812 512 830 502 880 504" fill="none" stroke="#918979" strokeWidth="14" filter="url(#b7)" />
      <path d="M812 545C808 620 810 680 800 740" fill="none" stroke="#7f7f7b" strokeWidth="12" filter="url(#b7)" />
      <path d="M795 725C812 780 835 830 855 880" fill="none" stroke="#92938b" strokeWidth="18" filter="url(#glow)" />
      <ellipse cx="910" cy="534" rx="85" ry="15" transform="rotate(-9 910 534)" fill="#b5b4b0" filter="url(#glow)" />
      <ellipse cx="868" cy="543" rx="32" ry="12" transform="rotate(-18 868 543)" fill="#dcdbd8" filter="url(#glow)" />
      <ellipse cx="830" cy="620" rx="10" ry="66" transform="rotate(5 830 620)" fill="#b0b0ac" filter="url(#glow)" />
      <ellipse cx="838" cy="576" rx="12" ry="34" transform="rotate(14 838 576)" fill="#fff" filter="url(#b7)" />
      <ellipse cx="839" cy="568" rx="6" ry="18" transform="rotate(16 839 568)" fill="#fff" filter="url(#b3)" />
      {/* brow */}
      <path d="M720 474L743 459C765 447 800 438 855 434L830 483L806 490L794 535Z" fill="#6e6b62" />
      <path d="M740 462C770 444 805 438 850 437" fill="none" stroke="#5a5952" strokeWidth="10" filter="url(#b3)" />
      <path d="M752 456C785 454 802 470 812 486" fill="none" stroke="#938b7e" strokeWidth="9" filter="url(#b3)" />
      {/* neck below the eye */}
      <path d="M640 740L785 704C792 760 812 820 836 872H640Z" fill="url(#neck)" />
      <path d="M689 872H836L870 868L1240 869H1595L1704 863L1770 864V900H680Z" fill="url(#rim)" />
      <path d="M680 886C690 878 710 875 740 878" fill="none" stroke="#a0a199" strokeWidth="9" filter="url(#b7)" />
      <path d="M1738 868C1756 868 1764 872 1764 890" fill="none" stroke="#9d9f97" strokeWidth="8" filter="url(#b3)" />
      {/* back ridge */}
      <path d={`${TAIL_OUT}L1755 833L1704 783L1610 707C1577 680 1545 655 1508 630C1477 609 1440 586 1400 563C1373 549 1345 536 1313 523C1283 509 1252 498 1218 488L1168 476Z`} fill="#857f74" />
      <path d="M1180 464C1240 478 1290 498 1325 512C1400 546 1450 578 1502 612C1560 653 1600 688 1650 733" fill="none" stroke="#6f6a5f" strokeWidth="8" filter="url(#b3)" />
      <path d={TAIL_OUT} fill="none" stroke="#b9bdb3" strokeWidth="17" filter="url(#b3)" />
      {/* fin */}
      <path d="M830 483L855 434L915 366L916 318L907 299L926 260L960 262L1150 436L1185 452L1165 478L1141 484L942 497L877 501C855 501 840 493 830 483Z" fill="url(#fin)" />
      <path d="M918 318L907 299C910 280 920 262 940 260L965 290L945 293Z" fill="#8b867c" />
      <path d="M920 300C926 285 934 278 950 282" fill="none" stroke="#d5d4cf" strokeWidth="4" filter="url(#b3)" />
      <path d="M909 300C912 280 925 266 945 263" fill="none" stroke="#66645c" strokeWidth="6" filter="url(#b3)" />
      <path d="M951 265L962 290L1067 373L1129 450L1160 452L1120 400L1031 312Z" fill="#827d72" />
      <path d="M965 276C1020 315 1090 390 1146 446" fill="none" stroke="#a29a8e" strokeWidth="5" filter="url(#b3)" />
      <path d="M1068 366L1140 446" stroke="#c3c4be" strokeWidth="4" filter="url(#b3)" />
      <path d="M985 278C1040 320 1100 385 1150 440" fill="none" stroke="#7b7d75" strokeWidth="5" filter="url(#b3)" />
      <path d="M920 322C940 350 930 385 912 402" fill="none" stroke="#9b9e97" strokeWidth="7" filter="url(#b3)" />
      <path d="M866 467C925 464 1060 452 1145 452L1168 476L1141 484L942 497L877 501C860 500 850 494 846 488Z" fill="#77736a" />
      <path d="M880 478C960 472 1050 462 1130 460" fill="none" stroke="#66635b" strokeWidth="7" filter="url(#b3)" />
      <path d="M868 488C940 488 1040 474 1132 472" fill="none" stroke="#b5b2ab" strokeWidth="5" filter="url(#b3)" />
      <ellipse cx="888" cy="489" rx="30" ry="5" fill="#f4f4f2" filter="url(#b3)" />
      <path d="M1150 450C1160 462 1168 462 1178 460" fill="none" stroke="#5e5c55" strokeWidth="8" filter="url(#b3)" />
      <path d={FACE} fill="url(#face)" />
    </g>

    {/* eye socket and ball */}
    <path d="M725 475C732 470 740 468 747 469C768 473 786 500 796 530C805 556 807 580 807 606C807 645 799 675 787 707C770 755 742 792 705 792C692 791 682 786 676 779Z" fill="#3a3834" />
    <path d="M796 535C810 580 809 660 788 706" fill="none" stroke="#a6a7a2" strokeWidth="2" />
    <path d="M780 716C762 760 740 779 715 786" fill="none" stroke="#8f908b" strokeWidth="4" filter="url(#b3)" />
    <path d={SPHERE} fill="url(#ball)" />
    <g clipPath="url(#inBall)">
      <rect x="540" y="470" width="280" height="320" fill="url(#ballRim)" />
      <path d="M594 588C612 530 680 518 740 548" fill="none" stroke="#a79e90" strokeWidth="22" filter="url(#glow)" />
      <path d="M614 596C645 562 740 560 775 594" fill="none" stroke="#6b665f" strokeWidth="15" filter="url(#b7)" />
      <ellipse cx="695" cy="620" rx="85" ry="10" fill="#999996" filter="url(#b7)" />
      <ellipse cx="695" cy="641" rx="60" ry="4" fill="#736e67" filter="url(#b7)" />
      <ellipse cx="680" cy="662" rx="75" ry="9" fill="#8d8f89" filter="url(#glow)" />
      <rect x="540" y="470" width="280" height="320" fill="url(#ballShade)" />
      <path d="M728 478C762 482 787 520 798 570" fill="none" stroke="#605e56" strokeWidth="12" filter="url(#b7)" />
    </g>
    <circle cx="695" cy="590" r="17" fill="#fff" filter="url(#b7)" />
    <circle cx="695" cy="589" r="11" fill="#fff" filter="url(#b3)" />

    {/* edges */}
    <g fill="none" stroke="#1d1c19" strokeWidth="1.200" strokeLinejoin="round">
      <path d="M725 476C748 478 768 492 778 509C786 522 792 536 796 550C801 568 804 585 804 605C804 640 797 672 785 703C776 727 765 745 754 757C742 769 726 777 705 779" />
      <path d="M725 475C732 470 740 468 747 469C768 473 786 500 796 530C805 556 807 580 807 606C807 645 799 675 787 707C770 755 742 792 705 792C692 791 682 786 676 779" />
      <path d="M743 459C775 454 795 476 806 490L796 530M806 490C815 487 822 486 830 483" />
      <path d="M725 475L744 459C765 447 800 438 855 434" strokeWidth=".8" />
      <path d="M785 704C789 740 797 766 803 785C812 815 822 840 836 871" />
      <path d="M689 873H800L836 871L870 868L897 867L1240 869H1560C1620 869 1670 863 1704 863L1768 864" />
      <path d="M792 872C797 882 802 888 810 890M814 872C818 882 825 888 832 890M836 871C840 882 846 888 854 890M855 870C857 880 860 887 866 890M870 868L872 890" />
      <path d="M651 772C653 788 658 800 665 821C669 835 676 850 689 873C697 886 705 889 718 890H1745C1762 890 1768 875 1768 862" />
      <path d={FACE} />
      <path d="M962 290C952 283 947 272 953 265M953 265C972 272 1004 296 1031 318C1062 346 1100 388 1120 408L1149 436" strokeWidth="1" />
      <path d="M966 291C1010 322 1050 356 1080 385" strokeWidth="1" />
      <path d="M907 299C908 308 912 315 918 318" />
      <path d="M882 468H866C858 462 854 455 852 446L848 442C832 444 820 448 819 457C821 468 824 475 830 483C842 494 855 501 877 501C900 501 920 499 942 497C970 494 1000 490 1031 489C1070 487 1110 486 1141 484C1155 482 1162 480 1168 476C1176 470 1180 462 1175 457C1176 453 1181 456 1183 453L1169 447" />
      <path d="M882 468L877 501M1131 451L1141 484M1129 450L1145 452C1150 462 1158 470 1168 476M1145 452C1150 444 1142 440 1146 436L1152 437" />
      <path d="M821 462C830 460 842 456 850 448M823 467C834 464 844 461 853 455M830 481C842 478 852 472 860 464M836 485C846 482 858 475 865 468M846 490L866 468" strokeWidth=".9" />
      <path d={TAIL_IN} />
      <path d={TAIL_OUT} strokeWidth=".8" />
      <path d="M1755 833C1760 848 1762 870 1755 880C1750 887 1744 890 1738 890M1755 833L1759 834M1766 866C1764 880 1756 888 1744 890" />
    </g>
  </Scene>
);

/* ---------- data ---------- */

const GROUPS: { name: string; pad: number; on?: boolean; tools: [string, string][] }[] = [
  { name: "CREATE", pad: 8, on: true, tools: [["sketch", "Create Sketch"], ["extrude", "Extrude"], ["revolve", "Revolve"], ["hole", "Hole"], ["pattern", "Pattern"], ["formStar", "Create Form"]] },
  { name: "MODIFY", pad: 8, tools: [["press", "Press Pull"], ["fillet", "Fillet"], ["shell", "Shell"], ["combine", "Combine"], ["split", "Split Body"], ["move", "Move"]] },
  { name: "ASSEMBLE", pad: 8, tools: [["newComponent", "New Component"], ["joint", "Joint"], ["bom", "Bill of Materials"]] },
  { name: "CONFIGURE", pad: 12, tools: [["configBody", "Configure Model"], ["configTable", "Configuration Table"]] },
  { name: "CONSTRUCT", pad: 22, tools: [["construct", "Offset Plane"]] },
  { name: "INSPECT", pad: 21, tools: [["inspect", "Measure"]] },
  { name: "INSERT", pad: 8, tools: [["derive", "Insert Derive"], ["bolt", "Insert Fastener"], ["image", "Canvas"]] },
  { name: "SELECT", pad: 21, tools: [["select", "Select"]] },
];

const NODES: { label: string; end: number; eye?: "on" | "off"; icon: "gear" | "folder" | "body"; iconW: number }[] = [
  { label: "Document Settings", end: 11, icon: "gear", iconW: 35 },
  { label: "Named Views", end: 9, icon: "folder", iconW: 40 },
  { label: "Origin", end: 15, eye: "off", icon: "folder", iconW: 40 },
  { label: "Bodies", end: 13, eye: "on", icon: "folder", iconW: 40 },
  { label: "Canvases", end: 13, eye: "off", icon: "folder", iconW: 40 },
  { label: "Sketches", end: 13, eye: "off", icon: "folder", iconW: 40 },
  { label: "6455K2_Plastic Ball Bearing:1", end: 13, eye: "off", icon: "body", iconW: 40 },
];

const FEATURES = [
  "image", "image", "image", "image", "component", "sketchSmall", "formSmall", "sphere", "move", "move", "box", "move",
  "extrude", "combine", "mirror", "formSmall", "mirror", "combine", "combine", "fillet", "chamfer", "fillet", "fillet",
];

const PLAY: [string, string][] = [
  ["Go to start", "M0 3V23H3V3ZM20 3V23L5 13Z"],
  ["Step back", "M14 3V23L0 13ZM15 9H18V17H15Z"],
  ["Play", "M1 1L20 13L1 25Z"],
  ["Step forward", "M8 3V23L22 13ZM3 9H6V17H3Z"],
  ["Go to end", "M21 3V23H18V3ZM1 3V23L16 13Z"],
];

const N = "#4f5560";
const NAV: { name: string; w: number; gap?: number; draw: React.ReactNode }[] = [
  {
    name: "Orbit", w: 44, gap: 5,
    draw: (
      <>
        <path d="M2 15C0 11 5 9 11 9C18 9 22 12 20 15C19 17 16 18 14 18" fill="none" stroke={N} strokeWidth="1.300" />
        <path d="M9.500 24V7H7L11 1L15 7H12.500V24Z" fill="#d5dae3" stroke={N} />
        <path d="M9 18C6 18 4 17 3 15" fill="none" stroke="#222" strokeWidth="1.500" />
        <path d="M1 17L3 12L7 16Z" fill="#222" />
      </>
    ),
  },
  {
    name: "Look At", w: 35,
    draw: (
      <>
        <rect x="2" y="9" width="18" height="14" fill="#eef0f4" stroke={N} strokeWidth="1.500" />
        <rect x="6" y="13" width="11" height="6" fill="#a8b1c1" stroke={N} />
        <path d="M3 7L13 2V7M5 7H18" fill="none" stroke={N} strokeWidth="1.500" />
      </>
    ),
  },
  {
    name: "Pan", w: 35,
    draw: (
      <path d="M7 23L2 15C0 12 3 11 4 13L6 15L4 6C4 4 6 4 7 6L9 12L8 3C8 1 11 1 11 3L12 11L14 3C14 1 17 2 16 4L15 12L19 7C20 5 22 6 21 8L18 15L16 23Z" fill="#fff" stroke="#444" strokeWidth="1.200" />
    ),
  },
  {
    name: "Zoom", w: 35,
    draw: (
      <>
        <circle cx="9" cy="9" r="7.500" fill="#e9f2f4" stroke={N} strokeWidth="1.500" />
        <path d="M15 15L21 23" stroke="#333" strokeWidth="3.500" />
        <path d="M17 4H22M19.500 1.500V6.500M17 9H22" stroke="#333" strokeWidth="1.200" />
      </>
    ),
  },
  {
    name: "Fit", w: 45, gap: 6,
    draw: (
      <>
        <rect x="1" y="1" width="20" height="23" fill="none" stroke="#777" strokeDasharray="3 2" />
        <circle cx="9" cy="10" r="7.500" fill="#e9f2f4" stroke={N} strokeWidth="1.500" />
        <path d="M14 16L20 23" stroke="#333" strokeWidth="3.500" />
      </>
    ),
  },
  {
    name: "Display Settings", w: 42, gap: 2,
    draw: (
      <>
        <rect x="1" y="2" width="20" height="17" fill="#dfe3ea" stroke={N} strokeWidth="1.500" />
        <rect x="3.500" y="4.500" width="15" height="12" fill="#8db3e2" stroke="#47688f" />
        <path d="M8 19H14V22H17V24H5V22H8Z" fill="#c4cad5" stroke={N} />
      </>
    ),
  },
  {
    name: "Grid and Snaps", w: 42, gap: 2,
    draw: (
      <>
        <rect x="1" y="1" width="20" height="23" fill="#f6f6f6" stroke={N} strokeWidth="1.500" />
        <path d="M4 1V24M7 1V24M10 1V24M13 1V24M16 1V24M19 1V24M1 4H21M1 7H21M1 10H21M1 13H21M1 16H21M1 19H21M1 22H21" stroke="#777" strokeWidth=".8" />
      </>
    ),
  },
  {
    name: "Viewports", w: 36, gap: 2,
    draw: (
      <>
        <rect x="1" y="2" width="20" height="20" fill="#dfe6f0" stroke="#47688f" strokeWidth="1.500" />
        <path d="M3 4H10V11H3ZM12 4H19V11H12ZM3 13H10V20H3ZM12 13H19V20H12Z" fill="#8db3e2" stroke="#47688f" />
      </>
    ),
  },
];

export default function App() {
  return (
    <AppWindow>
      <Global />
      <Frame>
        <TitleBar>
          <Lights>
            <Light $c="#ee6a5f" aria-label="Close" />
            <Light $c="#f5be4f" aria-label="Minimise" />
            <Light $c="#61c554" aria-label="Zoom" />
          </Lights>
          <WindowTitle>Pepe 1.7 v5 (My Designs) - Autodesk Fusion Personal (Not for Commercial Use)</WindowTitle>
        </TitleBar>

        <TabBar>
          <QuickTools>
            <QuickButton $gap={25} aria-label="Data panel">
              <svg width="21" height="20" viewBox="0 0 21 20" fill="currentColor">
                {[0, 7, 14].flatMap((x) => [0, 7, 14].map((y) => <rect key={`${x}-${y}`} x={x} y={y} width="6" height="6" />))}
              </svg>
            </QuickButton>
            <QuickButton $gap={25} aria-label="File">
              <svg width="18" height="22" viewBox="0 0 18 22" fill="currentColor">
                <path d="M1 0H11V7H18V21Q18 22 17 22H1Q0 22 0 21V1Q0 0 1 0ZM13 0L18 5H13Z" />
              </svg>
              <Caret w={10} c="#606060" />
            </QuickButton>
            <QuickButton $gap={25} $dim aria-label="Save">
              <svg width="20" height="20" viewBox="0 0 20 20" fill="currentColor" fillRule="evenodd">
                <path d="M0 1Q0 0 1 0H4V7H16V0H19Q20 0 20 1V19Q20 20 19 20H16V12H6V20H4L0 16ZM6 0H14V5H6ZM8 14H14V20H12V16H10V20H8Z" />
              </svg>
            </QuickButton>
            <QuickButton $gap={16} aria-label="Undo">
              <svg width="19" height="17" viewBox="0 0 19 17" fill="none" stroke="currentColor" strokeWidth="2.600">
                <path d="M8 1L2 7L8 13M2 7H10C15 7 17 11 17 17" />
              </svg>
              <Caret w={10} c="#606060" />
            </QuickButton>
            <QuickButton $dim aria-label="Redo">
              <svg width="19" height="17" viewBox="0 0 19 17" fill="none" stroke="currentColor" strokeWidth="2.600">
                <path d="M11 1L17 7L11 13M17 7H9C4 7 2 11 2 17" />
              </svg>
              <Caret w={10} c="#8d8d8d" />
            </QuickButton>
          </QuickTools>
          <SideTab aria-label="Home">
            <svg width="20" height="18" viewBox="0 0 20 18" fill="currentColor">
              <path d="M10 0L20 10H17V18H12V12H8V18H3V10H0ZM14 1H17V5L14 3Z" />
            </svg>
          </SideTab>
          <ActiveTab>
            <TabName>
              <svg width="20" height="22" viewBox="0 0 20 22">
                <path d="M10 0L20 5V16L10 22L0 16V5Z" fill="#ff8f45" />
                <path d="M10 0L20 5L10 11L0 5Z" fill="#ffc8a0" />
                <path d="M20 5V16L10 22V11Z" fill="#ff6f0d" />
              </svg>
              Pepe 1.7 v5
            </TabName>
            <CloseTab aria-label="Close tab">
              <svg width="12" height="12" viewBox="0 0 12 12" stroke="currentColor" strokeWidth="2">
                <path d="M1 1L11 11M11 1L1 11" />
              </svg>
            </CloseTab>
          </ActiveTab>
          <NewTab aria-label="New design">
            <svg width="17" height="17" viewBox="0 0 17 17" fill="currentColor">
              <path d="M6.500 0H10.500V6.500H17V10.500H10.500V17H6.500V10.500H0V6.500H6.500Z" />
            </svg>
          </NewTab>
          <AccountTools>
            <AccountButton aria-label="Updates">
              <svg width="22" height="22" viewBox="-11 -11 22 22"><UpBadge x={0} y={0} /></svg>
            </AccountButton>
            <AccountButton aria-label="Extensions">
              <svg width="22" height="22" viewBox="0 0 22 22" fill="none" stroke="currentColor">
                <path d="M2.500 14.500A9.300 9.300 0 0 1 15 2.500" strokeWidth="2.400" />
                <path d="M19.600 7.500A9.300 9.300 0 0 1 4.500 17.700" strokeWidth="2.400" />
                <path d="M2 16L5.500 12.500C5 9 6.500 6.500 9 5L17 12.500C15.500 16 12 17.500 9 16.500L5 19.500Z" fill="currentColor" stroke="none" />
                <path d="M10.500 8L13.500 5M14 11.500L17 8.500" strokeWidth="2.600" />
              </svg>
            </AccountButton>
            <AccountButton aria-label="Job status">
              <svg width="22" height="22" viewBox="0 0 22 22" fill="none" stroke="currentColor">
                <circle cx="11" cy="11" r="10.300" strokeWidth="1.400" />
                <circle cx="11" cy="11" r="8.300" fill="currentColor" stroke="none" />
                <path d="M10.500 5V12H16" stroke="#dcdcdc" strokeWidth="1.600" />
              </svg>
            </AccountButton>
            <AccountButton aria-label="Notifications">
              <svg width="22" height="24" viewBox="0 0 22 24" fill="currentColor">
                <path d="M2 18C5 16 5 13 5 10C5 6 7 4 9.500 3.500V2H12V3.500C15 4 17 6 17 10C17 13 17 16 20 18V19H2ZM8 20.500H14Q11 24 8 20.500Z" />
                <circle cx="16.500" cy="6" r="5" fill="#0696d7" stroke="#cacaca" strokeWidth="1" />
              </svg>
            </AccountButton>
            <AccountButton aria-label="Help">
              <svg width="22" height="22" viewBox="0 0 22 22" fill="none">
                <circle cx="11" cy="11" r="11" fill="currentColor" />
                <path d="M7.500 8.500C7.500 3.500 14.500 4 14.500 8.300C14.500 11 11 10.800 11 14M11 15.500V18.200" stroke="#e2e2e2" strokeWidth="2.400" />
              </svg>
            </AccountButton>
            <Avatar aria-label="Account">
              <svg width="32" height="32" viewBox="0 0 32 32">
                <defs>
                  <clipPath id="avatarClip"><circle cx="16" cy="16" r="16" /></clipPath>
                  <linearGradient id="avatarSky" x1="0" y1="0" x2="0" y2="1">
                    <stop offset="0" stopColor="#8497b6" /><stop offset="1" stopColor="#b9c8de" />
                  </linearGradient>
                </defs>
                <g clipPath="url(#avatarClip)">
                  <rect width="32" height="32" fill="url(#avatarSky)" />
                  <path d="M8 8C8 0 24 0 24 8C24 14 22 18 20 20V24C25 26 29 27 30 32H2C3 27 7 26 12 24V20C10 18 8 14 8 8Z" fill="#465468" />
                </g>
              </svg>
            </Avatar>
          </AccountTools>
        </TabBar>

        <Ribbon>
          <WorkspaceButton>DESIGN <Caret w={9} /></WorkspaceButton>
          <RibbonMain>
            <RibbonTabs role="tablist">
              {["SOLID", "SURFACE", "MESH", "SHEET METAL", "PLASTIC", "UTILITIES", "MANAGE"].map((t, i) => (
                <RibbonTab key={t} role="tab" $active={i === 0} aria-selected={i === 0}>{t}</RibbonTab>
              ))}
            </RibbonTabs>
            <Groups>
              {GROUPS.map((g, i) => (
                <Group key={g.name} $pad={g.pad} $line={i < GROUPS.length - 1}>
                  <IconRow>
                    {g.tools.map(([icon, label]) => (
                      <ToolButton key={icon} aria-label={label} $active={icon === "select"}>
                        <Art n={icon} />
                      </ToolButton>
                    ))}
                  </IconRow>
                  <GroupLabel $on={g.on}>{g.name} <Caret w={9} /></GroupLabel>
                </Group>
              ))}
            </Groups>
          </RibbonMain>
        </Ribbon>

        <Viewport>
          <Model />
          <Overlay>
            <div>
              <PanelBar>
                <svg width="14" height="8" viewBox="0 0 14 8"><path d="M7 0V8L0 4ZM14 0V8L7 4Z" fill="#222" /></svg>
                <PanelName $left={14}>BROWSER</PanelName>
                <RoundToggle />
              </PanelBar>
              <Tree>
                <TreeRow $root>
                  <Twisty $root aria-label="Collapse">
                    <svg width="10" height="10" viewBox="0 0 10 10"><path d="M10 0V10H0Z" fill="#333" stroke="#000" /></svg>
                  </Twisty>
                  <NodeBox $end={9}>
                    <Eye />
                    <RootName><BodyCube pair />Pepe 1.7 v5</RootName>
                    <RootRadio type="radio" name="active" defaultChecked aria-label="Activate Pepe 1.7 v5" />
                  </NodeBox>
                </TreeRow>
                {NODES.map((n) => (
                  <TreeRow key={n.label}>
                    <Twisty aria-label={`Expand ${n.label}`}>
                      <svg width="10" height="14" viewBox="0 0 10 14"><path d="M1 1H3L9 7L3 13H1Z" fill="#fff" stroke="#333" strokeWidth="1.300" /></svg>
                    </Twisty>
                    <NodeBox $end={n.end}>
                      {n.eye && <NodeIcon $w={34}>{n.eye === "on" ? <Eye /> : <EyeOff />}</NodeIcon>}
                      <NodeIcon $w={n.iconW}>
                        {n.icon === "gear" ? <Gear /> : n.icon === "body" ? <BodyCube /> : <Folder />}
                      </NodeIcon>
                      <NodeText>{n.label}</NodeText>
                    </NodeBox>
                  </TreeRow>
                ))}
              </Tree>
            </div>
            <ViewCube width="115" height="120" viewBox="1918 207 115 120" aria-label="View cube">
              <defs>
                <linearGradient id="cubeFace" x1="0" y1="0" x2="0" y2="1">
                  <stop offset="0" stopColor="#ececec" /><stop offset="1" stopColor="#d8d9da" />
                </linearGradient>
              </defs>
              <ellipse cx="1968" cy="315" rx="44" ry="4" fill="#000" opacity=".35" filter="url(#b3)" />
              <rect x="1935" y="245" width="66" height="67" rx="1" fill="url(#cubeFace)" stroke="#9b9b9b" />
              <rect x="1947" y="258" width="42" height="41" fill="#d9dbde" opacity=".6" />
              <path d="M1934.500 235V313" stroke="#8a88f0" strokeWidth="1.600" />
              <path d="M1934 313H2013" stroke="#f08080" strokeWidth="2" />
              <text x="1968" y="285" textAnchor="middle" fontSize="15" fontWeight="700" fill="#96989b">FRONT</text>
              <text x="1934" y="231" textAnchor="middle" fontSize="19" fontWeight="700" fill="#8a88f0">Z</text>
              <text x="2023" y="320" textAnchor="middle" fontSize="18" fontWeight="600" fill="#f08080">X</text>
            </ViewCube>
          </Overlay>

          <OverlayBottom>
            <PanelBar>
              <PanelName $left={28}>COMMENTS</PanelName>
              <RoundToggle plus />
            </PanelBar>
            <NavBar>
              {NAV.map((n) => (
                <NavButton key={n.name} $w={n.w} $gap={n.gap} aria-label={n.name}>
                  <svg width="22" height="25" viewBox="0 0 22 25">{n.draw}</svg>
                  {n.gap && <Caret w={9} />}
                </NavButton>
              ))}
            </NavBar>
          </OverlayBottom>
        </Viewport>

        <Timeline>
          <Playback>
            {PLAY.map(([name, d]) => (
              <PlayButton key={name} aria-label={name}>
                <svg width="17" height="24" viewBox="0 0 22 26" preserveAspectRatio="none"><path d={d} fill="#5a5a5a" /></svg>
              </PlayButton>
            ))}
          </Playback>
          <Features>
            {FEATURES.map((f, i) => (
              <Feature key={i} $edge={i === 0 ? "first" : i === FEATURES.length - 1 ? "last" : undefined}>
                <FeatureButton aria-label={`Feature ${i + 1}`}><Art n={f} s={24} /></FeatureButton>
                {f === "component" && (
                  <ExpandBadge aria-label="Expand group">
                    <svg width="10" height="10" viewBox="0 0 10 10"><path d="M5 0V10M0 5H10" stroke="#fff" strokeWidth="2" /></svg>
                  </ExpandBadge>
                )}
              </Feature>
            ))}
          </Features>
          <Marker width="18" height="46" viewBox="0 0 18 46">
            <path d="M1 0H17V7L10 14V44H8V14L1 7Z" fill="#5c5c5c" />
          </Marker>
          <SettingsButton aria-label="Timeline settings"><Gear s={21} /></SettingsButton>
        </Timeline>
      </Frame>
    </AppWindow>
  );
}
